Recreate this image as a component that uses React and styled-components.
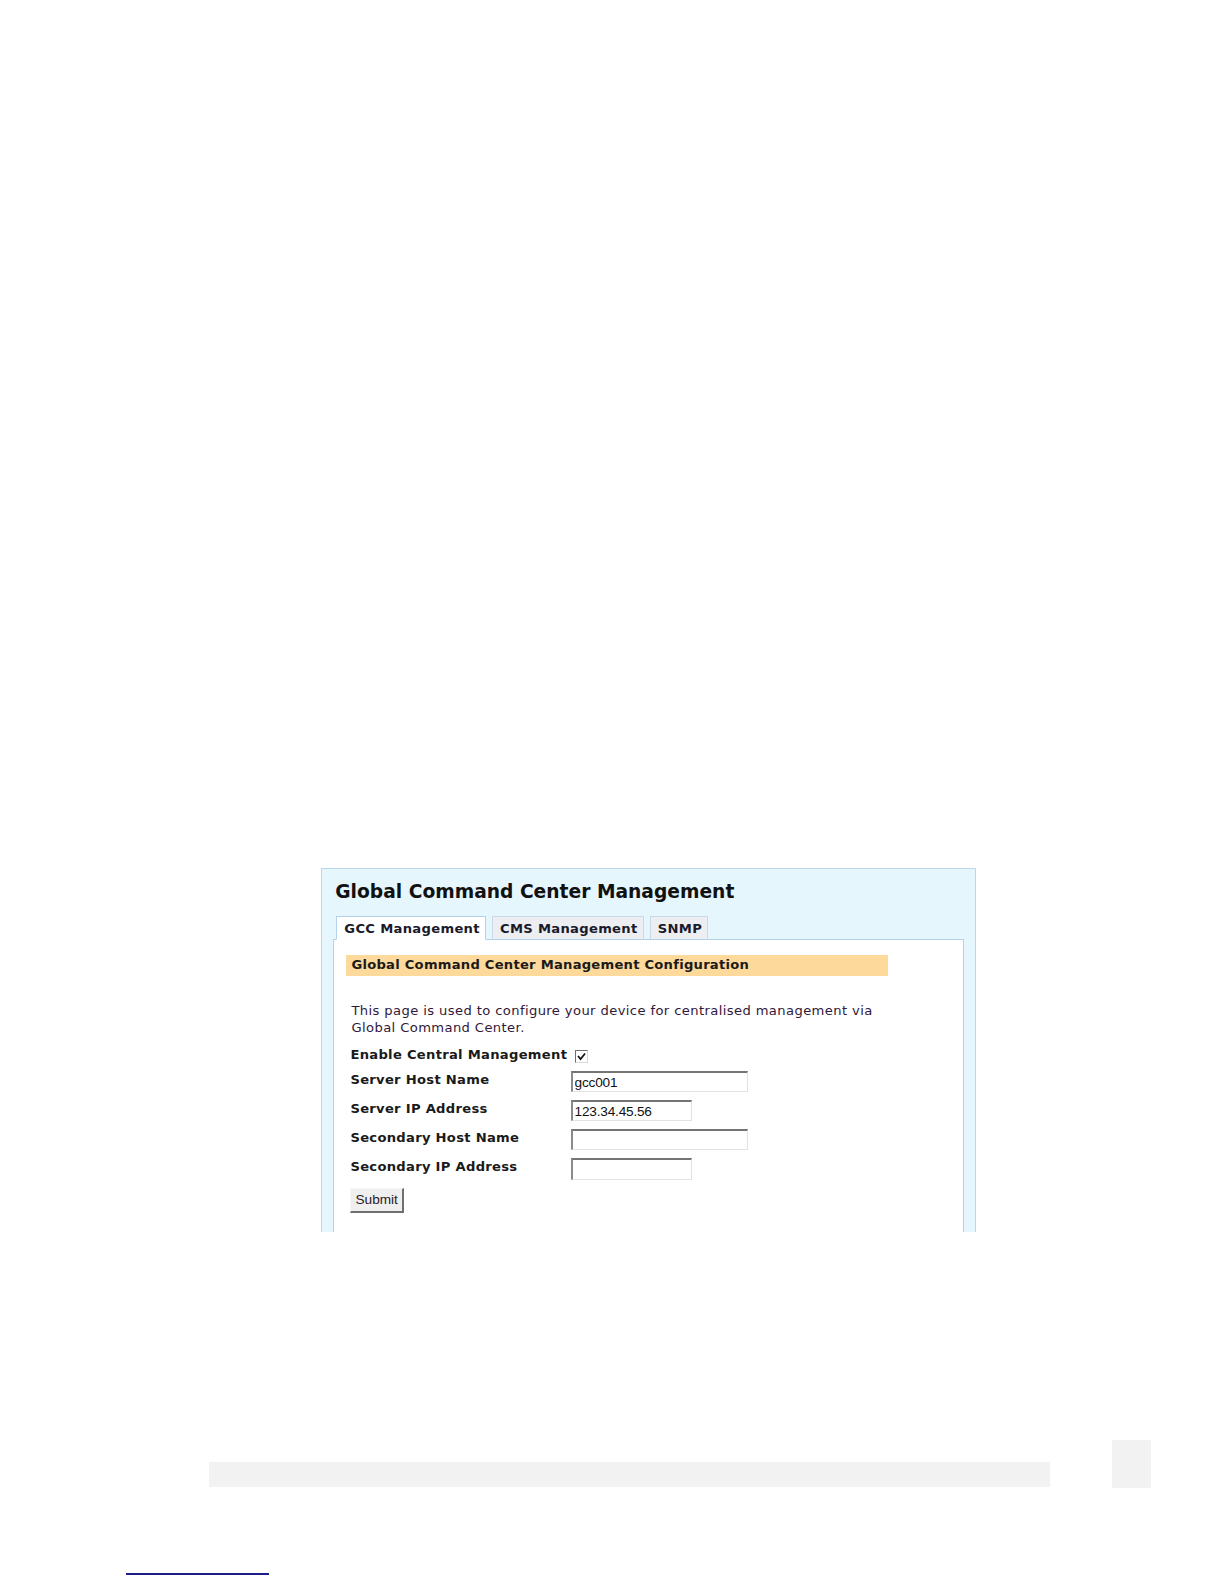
import React from "react";
import styled, { createGlobalStyle } from "styled-components";

const Global = createGlobalStyle`
  html, body {
    margin: 0;
    padding: 0;
    background: #ffffff;
  }
`;

const Page = styled.div`
  font-family: "DejaVu Sans", Verdana, sans-serif;
  padding-bottom: 10px;
  zoom: 1.01;
`;

const Figure = styled.div`
  padding: 859px 0 0 318px;
`;

const Panel = styled.div`
  width: 624px;
  height: 360px;
  overflow: hidden;
  background: #e6f6fd;
  border: 1px solid #bcd6ee;
  border-bottom: none;
  padding: 0 11px;
`;

const Title = styled.h1`
  margin: 0;
  padding: 11px 0 0 2px;
  height: 36px;
  font-size: 18.5px;
  line-height: 24px;
  font-weight: bold;
  color: #111111;
`;

const Tabs = styled.div`
  display: flex;
  gap: 6px;
  padding-left: 3px;
  position: relative;
  z-index: 1;
`;

const Tab = styled.div`
  height: 22px;
  padding: 0 5px 0 7px;
  display: flex;
  align-items: center;
  font-size: 13px;
  font-weight: bold;
  letter-spacing: 0.3px;
  color: #1a1a2a;
  border: 1px solid ${(p) => (p.$active ? "#b4d1ec" : "#c9d9ea")};
  border-bottom: ${(p) => (p.$active ? "1px solid #ffffff" : "1px solid #b4d1ec")};
  background: ${(p) => (p.$active ? "#ffffff" : "#eceef2")};
  margin-bottom: -1px;
`;

const Content = styled.div`
  background: #ffffff;
  border: 1px solid #b4d1ec;
  height: 300px;
  padding: 15px 0 0 12px;
`;

const SectionBar = styled.div`
  width: 531px;
  height: 20px;
  background: #fdd99b;
  padding-left: 5px;
  font-size: 13px;
  font-weight: bold;
  letter-spacing: 0.24px;
  line-height: 20px;
  color: #1a1a1a;
`;

const Description = styled.p`
  margin: 26px 0 0 5px;
  font-size: 13px;
  letter-spacing: 0.38px;
  line-height: 17px;
  color: #32193a;
`;

const Form = styled.div`
  margin: 9px 0 0 4px;
  display: grid;
  grid-template-columns: 218px auto;
  grid-auto-rows: 29px;
  grid-template-rows: 25px;
  align-items: start;
`;

const Label = styled.div`
  padding-top: 1px;
  font-size: 13px;
  font-weight: bold;
  letter-spacing: 0.28px;
  line-height: 16px;
  color: #1a1a1a;
  white-space: nowrap;
`;

const EnableLabel = styled(Label)`
  display: flex;
  align-items: center;
  gap: 8px;
  grid-column: 1 / span 2;
  line-height: 18px;
`;

const Check = styled.span`
  width: 11px;
  height: 11px;
  border: 1px solid #6e6e6e;
  border-right-color: #d8d8d8;
  border-bottom-color: #d8d8d8;
  background: #ffffff;
  display: inline-flex;
  align-items: center;
  justify-content: center;
  margin-top: 2px;
`;

const Input = styled.input`
  box-sizing: border-box;
  width: ${(p) => p.$w}px;
  height: 21px;
  margin: 0;
  padding: 1px 2px 0;
  border-style: solid;
  border-color: #747474 #e2e2e2 #e2e2e2 #8a8a8a;
  border-width: 2px 1px 1px 2px;
  font-family: "Liberation Sans", Arial, sans-serif;
  font-size: 13.5px;
  letter-spacing: -0.2px;
  color: #111111;
  background: #ffffff;
  outline: none;
`;

const Submit = styled.button`
  box-sizing: border-box;
  width: 53px;
  height: 25px;
  padding: 0;
  margin: 0;
  font-family: "Liberation Sans", Arial, sans-serif;
  font-size: 13.5px;
  color: #2a1a2a;
  background: #efefef;
  border-style: solid;
  border-color: #f6f6f6 #6f6f6f #6f6f6f #f6f6f6;
  border-width: 1px 2px 2px 1px;
`;

const Footer = styled.div`
  margin-top: 206px;
  display: flex;
  align-items: flex-start;
  padding-left: 207px;
`;

const GrayBar = styled.div`
  width: 833px;
  height: 24px;
  margin-top: 22px;
  background: #f2f2f2;
`;

const PageBox = styled.div`
  width: 39px;
  height: 47px;
  margin-left: 61px;
  background: #f2f2f2;
`;

const Rule = styled.div`
  width: 141px;
  height: 2px;
  margin: 84px 0 0 125px;
  background: #1c1c8e;
`;

const fields = [
  { label: "Server Host Name", value: "gcc001", w: 176 },
  { label: "Server IP Address", value: "123.34.45.56", w: 120 },
  { label: "Secondary Host Name", value: "", w: 176 },
  { label: "Secondary IP Address", value: "", w: 120 },
];

export default function App() {
  return (
    <Page>
      <Global />
      <Figure>
        <Panel>
          <Title>Global Command Center Management</Title>
          <Tabs>
            <Tab $active>GCC Management</Tab>
            <Tab>CMS Management</Tab>
            <Tab>SNMP</Tab>
          </Tabs>
          <Content>
            <SectionBar>Global Command Center Management Configuration</SectionBar>
            <Description>
              This page is used to configure your device for centralised management via
              <br />
              Global Command Center.
            </Description>
            <Form>
              <EnableLabel>
                Enable Central Management
                <Check>
                  <svg width="9" height="9" viewBox="0 0 9 9">
                    <path d="M1 4 L3.5 7 L8 1.5" fill="none" stroke="#111" strokeWidth="1.7" />
                  </svg>
                </Check>
              </EnableLabel>
              {fields.map((f) => (
                <React.Fragment key={f.label}>
                  <Label>{f.label}</Label>
                  <Input $w={f.w} defaultValue={f.value} />
                </React.Fragment>
              ))}
              <Submit>Submit</Submit>
            </Form>
          </Content>
        </Panel>
      </Figure>
      <Footer>
        <GrayBar />
        <PageBox />
      </Footer>
      <Rule />
    </Page>
  );
}
